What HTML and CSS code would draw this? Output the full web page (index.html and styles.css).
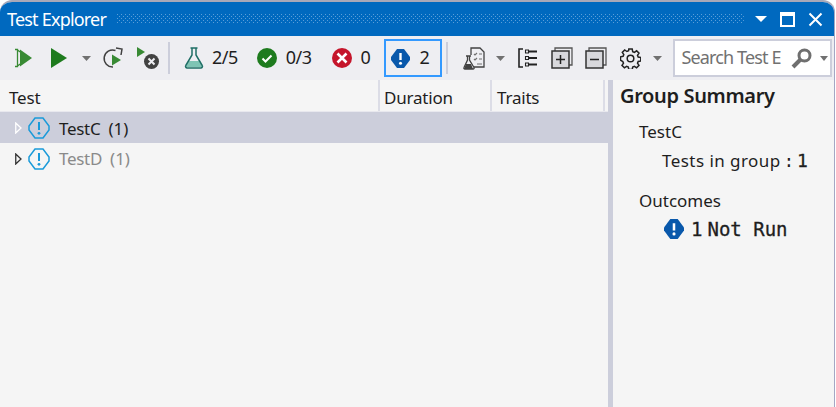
FILE: index.html
```html
<!DOCTYPE html>
<html lang="en">
<head>
<meta charset="utf-8">
<title>Test Explorer</title>
<link rel="stylesheet" href="styles.css">
</head>
<body>
<svg class="defs" width="0" height="0" aria-hidden="true">
  <defs>
    <pattern id="dots" width="4" height="4" patternUnits="userSpaceOnUse">
      <rect x="0" y="0" width="1" height="1" fill="#5a9ed8"/>
      <rect x="2" y="2" width="1" height="1" fill="#5a9ed8"/>
    </pattern>
  </defs>
</svg>
<div class="window">
  <header class="titlebar">
    <span class="title">Test Explorer</span>
    <svg class="grip" height="10"><rect width="100%" height="10" fill="url(#dots)"/></svg>
    <svg class="wbtn wbtn-tri" width="12" height="8" viewBox="0 0 12 8"><path d="M0 1h12L6 7z" fill="#fff"/></svg>
    <svg class="wbtn wbtn-max" width="15" height="15" viewBox="0 0 15 15"><rect x="1" y="1" width="13" height="13" fill="none" stroke="#fff" stroke-width="2"/><rect x="1" y="1" width="13" height="3" fill="#fff"/></svg>
    <svg class="wbtn wbtn-close" width="15" height="15" viewBox="0 0 15 15"><path d="M1.500 1.500l12 12M13.500 1.500l-12 12" stroke="#fff" stroke-width="2" fill="none"/></svg>
  </header>

  <div class="toolbar">
    <svg class="ic m14" width="18" height="20" viewBox="0 0 18 20"><path d="M1 1.500h2.500v17H1M3.500 2L9 6M3.500 18L9 14" stroke="#388a34" stroke-width="1.300" fill="none"/><path d="M6 1.500l12 8.500-12 8.500z" fill="#388a34"/></svg>
    <svg class="ic m19" width="17" height="20" viewBox="0 0 17 20"><path d="M0 0l16 10L0 20z" fill="#1e7b1e"/></svg>
    <svg class="ic m14" width="9" height="5" viewBox="0 0 9 5"><path d="M0 0h9L4.500 5z" fill="#717171"/></svg>
    <svg class="ic m11" width="22" height="22" viewBox="0 0 22 22"><path d="M13.500 3.500A8.500 8.500 0 1 0 11 20" fill="none" stroke="#424242" stroke-width="1.500"/><path d="M14 1l6 1-1 6" fill="none" stroke="#424242" stroke-width="1.500"/><path d="M10 7.500l9 5.500-9 5.500z" fill="#388a34"/></svg>
    <svg class="ic m13" width="23" height="23" viewBox="0 0 23 23"><path d="M0 0l8 5-8 5z" fill="#388a34"/><circle cx="14.500" cy="14.500" r="7.500" fill="#424242"/><path d="M11.500 11.500l6 6M17.500 11.500l-6 6" stroke="#eeeef2" stroke-width="2"/></svg>
    <span class="sep m8"></span>
    <svg class="ic m14" width="20" height="22" viewBox="0 0 20 22"><path d="M4.800 14h10.400l3 6H1.800z" fill="#7fc4b4"/><path d="M6.500 1h7M8 1v7L1.800 18.500A1.600 1.600 0 0 0 3.200 21h13.600a1.600 1.600 0 0 0 1.400-2.500L12 8V1" fill="none" stroke="#1f6f66" stroke-width="1.500"/></svg>
    <span class="count m8">2/5</span>
    <svg class="ic m19" width="20" height="20" viewBox="0 0 20 20"><circle cx="10" cy="10" r="10" fill="#1e7b1e"/><path d="M5.500 10.500l3 3 6-6" stroke="#fff" stroke-width="2" fill="none"/></svg>
    <span class="count m9">0/3</span>
    <svg class="ic m20" width="20" height="20" viewBox="0 0 20 20"><circle cx="10" cy="10" r="10" fill="#c5152b"/><path d="M5.500 5.500l9 9M14.500 5.500l-9 9" stroke="#fff" stroke-width="2.600"/></svg>
    <span class="count m9">0</span>
    <div class="selected">
      <svg class="ic" width="19" height="19" viewBox="0 0 19 19"><path d="M6 0h7l6 8v3l-6 8H6l-6-8V8z" fill="#0958ab"/><path d="M9.500 4v7" stroke="#fff" stroke-width="2.400"/><circle cx="9.500" cy="14.200" r="1.500" fill="#fff"/></svg>
      <span class="count m9">2</span>
    </div>
    <span class="sep m4"></span>
    <svg class="ic m15" width="22" height="24" viewBox="0 0 22 24"><path d="M8 9V2h9l4 4v15H11" fill="#eeeef2" stroke="#424242" stroke-width="1.300"/><path d="M11 8l1 1 2-2M11 13l1 1 2-2M16 8h3M16 13h3M14 18h5" stroke="#717171" stroke-width="1.200" fill="none"/><path d="M3 10h5M4.500 10v4L1 21.500a1 1 0 0 0 1 1.500h8a1 1 0 0 0 1-1.500L6.500 14v-4" fill="#eeeef2" stroke="#424242" stroke-width="1.300"/><path d="M3 18h5l2 5H1z" fill="#424242"/></svg>
    <svg class="ic m11" width="9" height="5" viewBox="0 0 9 5"><path d="M0 0h9L4.500 5z" fill="#717171"/></svg>
    <svg class="ic m13" width="19" height="20" viewBox="0 0 19 20"><path d="M5 1H1v18h4" fill="none" stroke="#222" stroke-width="1.600"/><path d="M7.500 2h3v3h-3zM7.500 8.500h3v3h-3zM7.500 15h3v3h-3z" fill="none" stroke="#222" stroke-width="1.100"/><path d="M11 3.500h8M11 10h8M11 16.500h8" stroke="#222" stroke-width="2"/></svg>
    <svg class="ic m14" width="22" height="22" viewBox="0 0 22 22"><path d="M4 4V1h17v17h-3" fill="none" stroke="#555" stroke-width="1.300"/><rect x="1" y="4" width="17" height="17" fill="#d8d8dc" stroke="#333" stroke-width="1.500"/><path d="M5 12.500h9M9.500 8v9" stroke="#222" stroke-width="1.500"/></svg>
    <svg class="ic m12" width="22" height="22" viewBox="0 0 22 22"><path d="M4 4V1h17v17h-3" fill="none" stroke="#555" stroke-width="1.300"/><rect x="1" y="4" width="17" height="17" fill="#d8d8dc" stroke="#333" stroke-width="1.500"/><path d="M5 12.500h9" stroke="#222" stroke-width="1.500"/></svg>
    <svg class="ic m13" width="21" height="21" viewBox="0 0 21 21"><path d="M8.800 1h3.400l.5 2.600 1.700.7 2.200-1.500 2.400 2.400-1.500 2.200.7 1.700 2.600.5v3.400l-2.600.5-.7 1.700 1.500 2.200-2.400 2.400-2.200-1.500-1.700.7-.5 2.600H8.800l-.5-2.600-1.700-.7-2.200 1.500-2.400-2.400 1.500-2.200-.7-1.700L.5 12.200V8.800l2.600-.5.7-1.700-1.500-2.200 2.400-2.400 2.200 1.500 1.700-.7z" fill="none" stroke="#222" stroke-width="1.500"/><circle cx="10.500" cy="10.500" r="3.300" fill="none" stroke="#222" stroke-width="1.500"/></svg>
    <svg class="ic m12" width="9" height="5" viewBox="0 0 9 5"><path d="M0 0h9L4.500 5z" fill="#717171"/></svg>
    <div class="search">
      <span class="search-text">Search Test E</span>
      <svg class="ic" width="21" height="21" viewBox="0 0 21 21"><circle cx="13.500" cy="7.500" r="5.500" fill="none" stroke="#6f6f6f" stroke-width="3"/><path d="M9.500 11.500L2 19" stroke="#6f6f6f" stroke-width="4"/></svg>
      <svg class="ic m8" width="8" height="5" viewBox="0 0 8 5"><path d="M0 0h8L4 5z" fill="#717171"/></svg>
    </div>
  </div>

  <div class="content">
    <section class="tests">
      <div class="columns">
        <div class="col col-test">Test</div>
        <div class="col col-duration">Duration</div>
        <div class="col col-traits">Traits</div>
        <div class="col col-rest"></div>
      </div>
      <div class="row row-selected">
        <svg class="arrow" width="7" height="12" viewBox="0 0 7 12"><path d="M.75 1v10L6 6z" fill="none" stroke="#fff" stroke-width="1.300"/></svg>
        <svg class="outline-ic" width="22" height="22" viewBox="0 0 22 22"><path d="M7 1h8l6 8v4l-6 8H7l-6-8V9z" fill="none" stroke="#1a9ad9" stroke-width="1.500"/><path d="M11 5v8" stroke="#1a9ad9" stroke-width="2"/><circle cx="11" cy="16.300" r="1.400" fill="#1a9ad9"/></svg>
        <span class="name">TestC</span><span class="num">(1)</span>
      </div>
      <div class="row row-dim">
        <svg class="arrow" width="7" height="12" viewBox="0 0 7 12"><path d="M.75 1v10L6 6z" fill="none" stroke="#333" stroke-width="1.300"/></svg>
        <svg class="outline-ic" width="22" height="22" viewBox="0 0 22 22"><path d="M7 1h8l6 8v4l-6 8H7l-6-8V9z" fill="none" stroke="#1a9ad9" stroke-width="1.500"/><path d="M11 5v8" stroke="#1a9ad9" stroke-width="2"/><circle cx="11" cy="16.300" r="1.400" fill="#1a9ad9"/></svg>
        <span class="name">TestD</span><span class="num">(1)</span>
      </div>
    </section>
    <div class="splitter"></div>
    <aside class="summary">
      <h2 class="summary-title">Group Summary</h2>
      <p class="group-name">TestC</p>
      <p class="group-count">Tests in group<span class="mono colon">:</span><span class="mono one">1</span></p>
      <p class="outcomes">Outcomes</p>
      <p class="outcome">
        <svg class="ic" width="20" height="20" viewBox="0 0 19 19"><path d="M6 0h7l6 8v3l-6 8H6l-6-8V8z" fill="#0958ab"/><path d="M9.500 4v7" stroke="#fff" stroke-width="2.400"/><circle cx="9.500" cy="14.200" r="1.500" fill="#fff"/></svg>
        <span class="mono outcome-num">1</span>
        <span class="mono outcome-text">Not Run</span>
      </p>
    </aside>
  </div>
</div>
</body>
</html>
```
FILE: styles.css
```css
html, body {
  margin: 0;
  padding: 0;
  width: 836px;
  height: 407px;
  overflow: hidden;
  background: #fff;
}
body {
  font-family: "Noto Sans", "Open Sans", sans-serif;
  color: #1e1e1e;
}
.defs { position: absolute; }
.window {
  width: 835px;
  height: 407px;
  display: flex;
  flex-direction: column;
  box-sizing: border-box;
  border-right: 1px solid #a4a7c4;
  border-top: 2px solid #a8a8b8;
  border-radius: 12px 12px 0 0;
  overflow: hidden;
  background: #f5f5f5;
}
.titlebar {
  height: 34px;
  flex: none;
  background: #0069bf;
  display: flex;
  align-items: center;
  color: #fff;
  padding-left: 7px;
}
.title {
  font-size: 18px;
  letter-spacing: -0.8px;
  white-space: nowrap;
}
.grip { flex: 1; margin: 0 0 0 11px; }
.wbtn { flex: none; }
.wbtn-tri { margin-left: 11px; }
.wbtn-max { margin-left: 13px; }
.wbtn-close { margin: 0 11px 0 13px; }
.toolbar {
  height: 44px;
  flex: none;
  background: #eeeef2;
  display: flex;
  align-items: center;
}
.ic { flex: none; display: block; }
.m4 { margin-left: 4px; }
.m8 { margin-left: 8px; }
.m9 { margin-left: 9px; }
.m11 { margin-left: 11px; }
.m12 { margin-left: 12px; }
.m13 { margin-left: 13px; }
.m14 { margin-left: 14px; }
.m15 { margin-left: 15px; }
.m19 { margin-left: 19px; }
.m20 { margin-left: 20px; }
.sep {
  width: 2px;
  height: 32px;
  background: #cccedb;
  flex: none;
}
.count {
  font-size: 18px;
  line-height: 26px;
  margin-top: -2px;
  letter-spacing: -0.5px;
  color: #1e1e1e;
  white-space: nowrap;
}
.selected {
  flex: none;
  width: 58px;
  height: 38px;
  box-sizing: border-box;
  margin-left: 14px;
  border: 2px solid #3399ff;
  display: flex;
  align-items: center;
  padding-left: 5px;
}
.search {
  flex: none;
  width: 159px;
  height: 38px;
  box-sizing: border-box;
  margin-left: 11px;
  background: #fff;
  border: 2px solid #cccedb;
  display: flex;
  align-items: center;
  padding-left: 6px;
}
.search-text {
  font-size: 18px;
  line-height: 26px;
  margin-top: -2px;
  letter-spacing: -0.85px;
  color: #717171;
  width: 110px;
  white-space: nowrap;
  overflow: hidden;
}
.content {
  flex: 1;
  display: flex;
  min-height: 0;
}
.tests {
  width: 608px;
  flex: none;
}
.columns {
  height: 32px;
  display: flex;
  box-sizing: border-box;
  font-size: 17px;
  border-bottom: 1px solid #e8e8ee;
}
.col {
  box-sizing: border-box;
  display: flex;
  align-items: center;
  padding: 4px 0 0;
  border-right: 2px solid #dcdde6;
  letter-spacing: -0.2px;
}
.col-test { width: 380px; padding-left: 9px; }
.col-duration { width: 112px; padding-left: 4px; }
.col-traits { width: 113px; padding-left: 5px; }
.col-rest { flex: 1; border: 0; }
.row {
  height: 31px;
  display: flex;
  align-items: center;
  font-size: 17px;
  padding-left: 15px;
}
.row-selected { background: #cccedb; }
.row-selected .name, .row-selected .num { padding-top: 2px; }
.row-dim { color: #8a8a8a; }
.arrow { flex: none; }
.outline-ic { flex: none; margin-left: 6px; }
.name { margin-left: 9px; letter-spacing: -0.3px; }
.num { margin-left: 8px; }
.splitter {
  width: 5px;
  flex: none;
  background: #cccedb;
}
.summary {
  flex: 1;
  padding-left: 7px;
  font-size: 17px;
}
.summary-title {
  font-size: 20px;
  font-weight: 600;
  margin: 0;
  padding-top: 1px;
  line-height: 30px;
  letter-spacing: -0.35px;
}
.summary p { margin: 0; }
.group-name { padding-left: 19px; padding-top: 9px; line-height: 24px; }
.group-count { padding-left: 42px; padding-top: 5px; line-height: 24px; letter-spacing: 0.45px; }
.mono { font-family: "DejaVu Sans Mono", "Liberation Mono", monospace; letter-spacing: 0; }
.colon { margin: 0 3px; }
.one { font-size: 18px; -webkit-text-stroke: 0.3px #1e1e1e; }
.outcomes { padding-left: 19px; padding-top: 16px; line-height: 24px; }
.outcome {
  padding-left: 44px;
  padding-top: 4px;
  display: flex;
  align-items: center;
  line-height: 24px;
}
.outcome-num { margin-left: 7px; font-size: 19px; -webkit-text-stroke: 0.3px #1e1e1e; }
.outcome-text { margin-left: 5px; font-size: 19px; -webkit-text-stroke: 0.3px #1e1e1e; }
```
